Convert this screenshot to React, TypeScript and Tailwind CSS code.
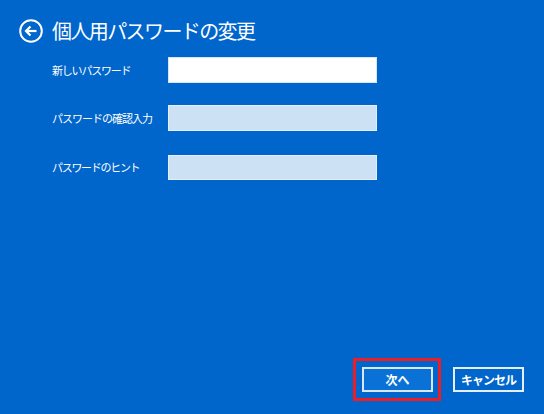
import React from "react";

const font = { fontFamily: '"Noto Sans CJK JP", "Noto Sans", sans-serif' };

export default function App() {
  return (
    <div
      className="w-[544px] h-[414px] bg-[#0066cc] flex flex-col text-white overflow-hidden"
      style={font}
    >
      <div className="flex items-center pt-[19px] pl-[19px] h-[43px]">
        <svg width="24" height="24" viewBox="0 0 24 24" className="shrink-0">
          <circle cx="12" cy="12" r="10.8" fill="none" stroke="white" strokeWidth="2" />
          <path d="M17.5 12H7.5" stroke="white" strokeWidth="2.2" fill="none" />
          <path d="M11.5 7.5L7 12l4.5 4.5" stroke="white" strokeWidth="2.2" fill="none" strokeLinejoin="miter" />
        </svg>
        <div className="ml-[9px] text-[20px] leading-none tracking-[-1.6px] mt-[-1px]">
          個人用パスワードの変更
        </div>
      </div>

      <div className="flex flex-col pl-[52px] mt-[14px] gap-[22px]">
        <div className="flex items-center h-[26px]">
          <div className="w-[116px] text-[11px] tracking-[-1.2px]">新しいパスワード</div>
          <div className="w-[209px] h-[26px] bg-white border border-[#d6e6f8]" />
        </div>
        <div className="flex items-center h-[26px]">
          <div className="w-[116px] text-[11px] tracking-[-1px]">パスワードの確認入力</div>
          <div className="w-[209px] h-[26px] bg-[#cde1f5] border border-[#e3eefa]" />
        </div>
        <div className="flex items-center h-[26px] mt-[1px]">
          <div className="w-[116px] text-[11px] tracking-[-1.3px]">パスワードのヒント</div>
          <div className="w-[209px] h-[25px] bg-[#cde1f5] border border-[#e3eefa]" />
        </div>
      </div>

      <div className="mt-auto flex justify-end items-center pr-[20px] pb-[13px]">
        <div className="border-[3px] border-[#ee1c25] p-[6px] pr-[5px]">
          <div className="w-[71px] h-[25px] bg-[#0a72d6] border-2 border-[#d8e8f8] flex items-center justify-center text-[12px] font-bold">
            次へ
          </div>
        </div>
        <div className="ml-[12px] w-[71px] h-[25px] bg-[#0066cc] border-2 border-[#e4effa] flex items-center justify-center text-[12px] font-bold tracking-[-1px]">
          キャンセル
        </div>
      </div>
    </div>
  );
}
